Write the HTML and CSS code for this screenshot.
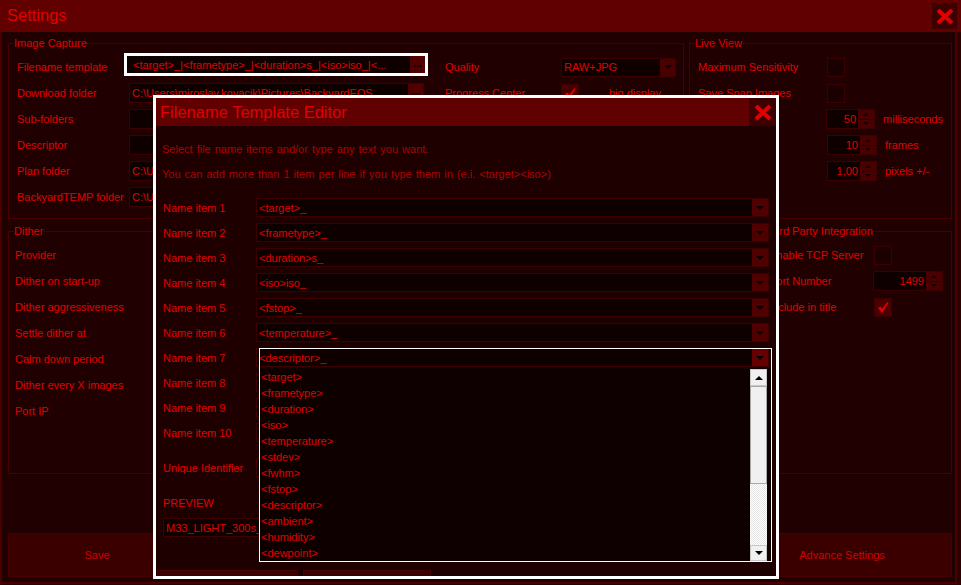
FILE: index.html
```html
<!DOCTYPE html>
<html lang="en">
<head>
  <meta charset="UTF-8">
  <meta name="viewport" content="width=device-width, initial-scale=1.0">
  <title>Settings</title>
  <link rel="stylesheet" href="styles.css">
</head>
<body>
  <div class="window">
    <div class="titlebar">
      <span class="title">Settings</span>
      <button class="close-btn main-close">
        <svg width="18" height="17" viewBox="0 0 18 17"><path d="M2 2 L16 15 M16 2 L2 15" stroke="#e00000" stroke-width="4"/></svg>
      </button>
    </div>

    <div class="content">
      <div class="top-row">
        <fieldset class="group capture">
          <legend>Image Capture</legend>
          <div class="group-body">
            <div class="rows paths">
              <div class="row"><span class="lbl">Filename template</span><div class="field focus"><span class="val">&lt;target&gt;_|&lt;frametype&gt;_|&lt;duration&gt;s_|&lt;iso&gt;iso_|&lt;...</span><span class="dots">...</span></div></div>
              <div class="row"><span class="lbl">Download folder</span><div class="field"><span class="val">C:\Users\miroslav.kovacik\Pictures\BackyardEOS</span><span class="dots">...</span></div></div>
              <div class="row"><span class="lbl">Sub-folders</span><div class="field"><span class="val"></span></div></div>
              <div class="row"><span class="lbl">Descriptor</span><div class="field"><span class="val"></span></div></div>
              <div class="row"><span class="lbl">Plan folder</span><div class="field"><span class="val">C:\Users\miroslav.kovacik\Documents\Plans</span><span class="dots">...</span></div></div>
              <div class="row"><span class="lbl">BackyardTEMP folder</span><div class="field"><span class="val">C:\Users\miroslav.kovacik\AppData\Temp</span><span class="dots">...</span></div></div>
            </div>
            <div class="rows options">
              <div class="row"><span class="lbl">Quality</span><div class="combo quality"><span class="val">RAW+JPG</span><span class="arrow"></span></div></div>
              <div class="row"><span class="lbl">Progress Center</span><span class="check on"><svg width="12" height="12" viewBox="0 0 12 12"><path d="M1 7 L3.5 5.5 L5 8 L10.5 1 L11.5 2 L5.5 11.5 L4.5 11.5 Z" fill="#e00000"/></svg></span><span class="note">big display</span></div>
            </div>
          </div>
        </fieldset>

        <fieldset class="group live">
          <legend>Live View</legend>
          <div class="group-body rows">
            <div class="row"><span class="lbl">Maximum Sensitivity</span><span class="check"></span></div>
            <div class="row"><span class="lbl">Save Snap Images</span><span class="check"></span></div>
            <div class="row"><span class="lbl">Delay</span><div class="spin"><span class="num">50</span><span class="btns"><span class="up"></span><span class="down"></span></span></div><span class="unit">milliseconds</span></div>
            <div class="row"><span class="lbl">Frames</span><div class="spin"><span class="num">10</span><span class="btns"><span class="up"></span><span class="down"></span></span></div><span class="unit">frames</span></div>
            <div class="row"><span class="lbl">Tolerance</span><div class="spin"><span class="num">1,00</span><span class="btns"><span class="up"></span><span class="down"></span></span></div><span class="unit">pixels +/-</span></div>
          </div>
        </fieldset>
      </div>

      <div class="mid-row">
        <fieldset class="group dither">
          <legend>Dither</legend>
          <div class="group-body rows">
            <div class="row"><span class="lbl">Provider</span></div>
            <div class="row"><span class="lbl">Dither on start-up</span></div>
            <div class="row"><span class="lbl">Dither aggressiveness</span></div>
            <div class="row"><span class="lbl">Settle dither at</span></div>
            <div class="row"><span class="lbl">Calm down period</span></div>
            <div class="row"><span class="lbl">Dither every X images</span></div>
            <div class="row"><span class="lbl">Port IP</span></div>
          </div>
        </fieldset>

        <fieldset class="group third">
          <legend>Third Party Integration</legend>
          <div class="group-body rows">
            <div class="row"><span class="lbl">Enable TCP Server</span><span class="check"></span></div>
            <div class="row"><span class="lbl">Port Number</span><div class="spin port"><span class="num">1499</span><span class="btns"><span class="up"></span><span class="down"></span></span></div></div>
            <div class="row"><span class="lbl">Include in title</span><span class="check on"><svg width="12" height="12" viewBox="0 0 12 12"><path d="M1 7 L3.5 5.5 L5 8 L10.5 1 L11.5 2 L5.5 11.5 L4.5 11.5 Z" fill="#e00000"/></svg></span></div>
          </div>
        </fieldset>
      </div>

      <div class="actions">
        <button class="action save">Save</button>
        <button class="action advance">Advance Settings</button>
      </div>
    </div>

    <div class="dialog">
      <div class="dlg-title">
        <span>Filename Template Editor</span>
        <button class="close-btn dlg-close">
          <svg width="18" height="17" viewBox="0 0 18 17"><path d="M2 2 L16 15 M16 2 L2 15" stroke="#e00000" stroke-width="4"/></svg>
        </button>
      </div>

      <div class="dlg-body">
        <p class="hint">Select file name items and/or type any text you want.</p>
        <p class="hint second">You can add more than 1 item per line if you type them in (e.i. &lt;target&gt;&lt;iso&gt;)</p>

        <div class="items">
          <span class="lbl">Name item 1</span><div class="combo"><span class="val">&lt;target&gt;_</span><span class="arrow"></span></div>
          <span class="lbl">Name item 2</span><div class="combo"><span class="val">&lt;frametype&gt;_</span><span class="arrow"></span></div>
          <span class="lbl">Name item 3</span><div class="combo"><span class="val">&lt;duration&gt;s_</span><span class="arrow"></span></div>
          <span class="lbl">Name item 4</span><div class="combo"><span class="val">&lt;iso&gt;iso_</span><span class="arrow"></span></div>
          <span class="lbl">Name item 5</span><div class="combo"><span class="val">&lt;fstop&gt;_</span><span class="arrow"></span></div>
          <span class="lbl">Name item 6</span><div class="combo"><span class="val">&lt;temperature&gt;_</span><span class="arrow"></span></div>
          <span class="lbl">Name item 7</span><div class="combo open"><span class="val">&lt;descriptor&gt;_</span><span class="arrow"></span></div>
          <span class="lbl">Name item 8</span><div class="combo"><span class="val"></span><span class="arrow"></span></div>
          <span class="lbl">Name item 9</span><div class="combo"><span class="val"></span><span class="arrow"></span></div>
          <span class="lbl">Name item 10</span><div class="combo"><span class="val"></span><span class="arrow"></span></div>
        </div>

        <div class="items unique">
          <span class="lbl">Unique Identifier</span><div class="combo"><span class="val"></span><span class="arrow"></span></div>
        </div>

        <p class="preview-lbl">PREVIEW</p>
        <div class="field preview"><span class="val">M33_LIGHT_300s_800iso_f5.6_-10C_</span></div>
      </div>

      <div class="dlg-foot">
        <button class="action ok" title="OK"></button>
        <button class="action cancel" title="Cancel"></button>
      </div>

      <div class="popup">
        <div class="popup-head"></div>
        <div class="popup-list">
          <ul class="choices">
            <li>&lt;target&gt;</li>
            <li>&lt;frametype&gt;</li>
            <li>&lt;duration&gt;</li>
            <li>&lt;iso&gt;</li>
            <li>&lt;temperature&gt;</li>
            <li>&lt;stdev&gt;</li>
            <li>&lt;fwhm&gt;</li>
            <li>&lt;fstop&gt;</li>
            <li>&lt;descriptor&gt;</li>
            <li>&lt;ambient&gt;</li>
            <li>&lt;humidity&gt;</li>
            <li>&lt;dewpoint&gt;</li>
          </ul>
          <div class="scrollbar">
            <span class="sb-btn up"></span>
            <span class="sb-thumb"></span>
            <span class="sb-track"></span>
            <span class="sb-btn down"></span>
          </div>
        </div>
      </div>
    </div>
  </div>
</body>
</html>
```

FILE: styles.css
```css
* {
  margin: 0;
  padding: 0;
  box-sizing: border-box;
}

body {
  width: 961px;
  height: 585px;
  overflow: hidden;
  background: #2a0000;
  font-family: 'Liberation Sans', Arial, sans-serif;
  font-size: 11px;
  color: #e00000;
}

button {
  font: inherit;
  color: inherit;
  border: none;
  cursor: pointer;
}

.window {
  position: relative;
  width: 961px;
  height: 585px;
}

/* title bars */

.titlebar {
  height: 32px;
  background: #600000;
  display: flex;
  align-items: flex-start;
  justify-content: space-between;
}

.title {
  font-size: 16.5px;
  line-height: 30px;
  padding-left: 7px;
}

.close-btn {
  display: flex;
  align-items: center;
  justify-content: center;
  background: #3c0000;
}

.main-close {
  width: 25px;
  height: 26px;
  margin: 3px 4px 0 0;
}

/* main window */

.content {
  width: 957px;
  height: 552px;
  background: #200000;
  border: 2px solid #4a0000;
  border-top: 0;
  padding: 5px 3px 0 6px;
}

.top-row {
  display: flex;
  gap: 5px;
  height: 182px;
}

.mid-row {
  display: flex;
  justify-content: space-between;
  height: 249px;
  margin-top: 6px;
}

.group {
  border: 1px solid #4b0000;
  margin: 0;
  padding: 0;
  min-width: 0;
}

.group legend {
  margin-left: 5px;
  padding: 0;
  line-height: 13px;
  font-size: 11px;
}

.group-body {
  padding: 7px 8px;
}

.rows {
  display: flex;
  flex-direction: column;
  gap: 6px;
}

.row {
  display: flex;
  align-items: center;
  height: 20px;
  white-space: nowrap;
}

.lbl {
  white-space: nowrap;
}

.capture {
  width: 676px;
}

.capture .group-body {
  display: flex;
  gap: 21px;
}

.paths .lbl {
  width: 112px;
}

.options .lbl {
  width: 116px;
}

.live {
  flex: 1;
}

.live .lbl {
  width: 129px;
}

.dither {
  width: 372px;
}

.dither .group-body {
  padding-left: 6px;
}

.third {
  width: 194px;
}

.third .group-body {
  padding-left: 10px;
}

.third .lbl {
  width: 105px;
}

/* inputs */

.field,
.combo {
  display: flex;
  align-items: stretch;
  height: 20px;
  background: #0f0000;
  border: 1px solid #3c0000;
}

.field {
  width: 295px;
}

.val {
  flex: 1;
  padding-left: 2px;
  overflow: hidden;
  white-space: nowrap;
  display: flex;
  align-items: center;
}

.dots {
  width: 15px;
  background: #500000;
  color: #0a0000;
  font-weight: bold;
  text-align: center;
  line-height: 14px;
}

.field.focus {
  align-self: flex-start;
  width: 304px;
  height: 23px;
  margin: -4px -4px 0 -5px;
  border: 3px solid #fff;
}

.field.focus .val {
  padding-left: 6px;
}

.quality {
  width: 115px;
  height: 19px;
}

.arrow {
  width: 15px;
  background: #4a0000;
  display: flex;
  align-items: center;
  justify-content: center;
}

.arrow::after {
  content: "";
  border-left: 4px solid transparent;
  border-right: 4px solid transparent;
  border-top: 4px solid #0a0000;
}

.check {
  width: 18px;
  height: 19px;
  border: 1px solid #3c0000;
  background: #1a0000;
  display: flex;
  align-items: center;
  justify-content: center;
}

.check.on {
  background: #4a0000;
}

.note {
  margin-left: 30px;
}

.spin {
  display: flex;
  width: 50px;
  height: 20px;
  border: 1px solid #3c0000;
}

.spin.port {
  width: 71px;
}

.spin .num {
  flex: 1;
  background: #0f0000;
  text-align: right;
  padding-right: 2px;
  line-height: 18px;
}

.spin .btns {
  width: 16px;
  display: flex;
  flex-direction: column;
  gap: 1px;
  background: #2a0000;
}

.spin .btns span {
  flex: 1;
  background: #4a0000;
  display: flex;
  align-items: center;
  justify-content: center;
}

.spin .up::after {
  content: "";
  border-left: 3px solid transparent;
  border-right: 3px solid transparent;
  border-bottom: 3px solid #0a0000;
}

.spin .down::after {
  content: "";
  border-left: 3px solid transparent;
  border-right: 3px solid transparent;
  border-top: 3px solid #0a0000;
}

.unit {
  margin-left: 8px;
}

/* bottom buttons */

.actions {
  display: flex;
  justify-content: space-between;
  margin-top: 59px;
}

.action {
  height: 44px;
  background: #3a0000;
  border: 1px solid #480000;
  color: #d00000;
}

.save {
  width: 178px;
}

.advance {
  width: 220px;
}

/* template editor dialog */

.dialog {
  position: absolute;
  left: 153px;
  top: 95px;
  width: 626px;
  height: 484px;
  border: 3px solid #fff;
  background: #1f0000;
  overflow: hidden;
}

.dlg-title {
  height: 28px;
  background: #600000;
  display: flex;
  justify-content: space-between;
  font-size: 16.5px;
  line-height: 28px;
  padding-left: 4px;
}

.dlg-close {
  width: 27px;
  height: 28px;
}

.dlg-body {
  padding: 17px 7px 0 6px;
}

.hint {
  line-height: 13px;
  color: #b00000;
  white-space: nowrap;
  word-spacing: 1px;
}

.hint.second {
  margin-top: 12px;
}

.items {
  display: grid;
  grid-template-columns: 94px 1fr;
  grid-auto-rows: 19px;
  row-gap: 6px;
  margin-top: 17px;
  align-items: center;
}

.items .lbl {
  padding-left: 1px;
}

.items .combo {
  height: 19px;
}

.items .arrow {
  width: 16px;
  background: #500000;
}

.combo.open .arrow {
  background: #640000;
}

.items.unique {
  margin-top: 16px;
}

.preview-lbl {
  margin-top: 20px;
  line-height: 13px;
  padding-left: 1px;
}

.field.preview {
  width: 606px;
  height: 19px;
  margin: 8px 0 0 1px;
}

.dlg-foot {
  display: flex;
  gap: 5px;
  margin-top: 33px;
  padding-left: 1px;
}

.dlg-foot .action {
  height: 30px;
}

.ok {
  width: 141px;
}

.cancel {
  width: 128px;
}

/* open drop-down of name item 7 */

.popup {
  position: absolute;
  left: 103px;
  top: 250px;
  width: 513px;
  height: 214px;
  border: 1px solid #fff;
}

.popup-head {
  height: 19px;
}

.popup-list {
  display: flex;
  height: 193px;
  background: #0f0000;
  padding: 1px 4px 0 1px;
}

.choices {
  flex: 1;
  list-style: none;
  line-height: 16px;
}

.scrollbar {
  width: 17px;
  display: flex;
  flex-direction: column;
}

.sb-btn {
  height: 17px;
  background: #f0f0f0;
  border: 1px solid #c8c8c8;
  display: flex;
  align-items: center;
  justify-content: center;
}

.sb-btn.down {
  height: 16px;
}

.sb-btn.up::after {
  content: "";
  border-left: 4px solid transparent;
  border-right: 4px solid transparent;
  border-bottom: 4px solid #000;
}

.sb-btn.down::after {
  content: "";
  border-left: 4px solid transparent;
  border-right: 4px solid transparent;
  border-top: 4px solid #000;
}

.sb-thumb {
  height: 98px;
  background: #f0f0f0;
  border: 1px solid #a8a8a8;
}

.sb-track {
  height: 61px;
  background: repeating-conic-gradient(#fff 0 25%, #e4e4e4 0 50%) 0 0 / 2px 2px;
}
```
